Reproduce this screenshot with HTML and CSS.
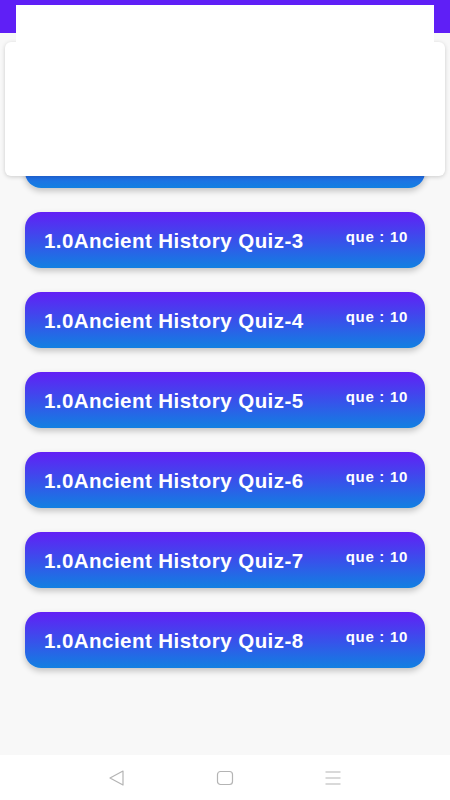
FILE: index.html
```html
<!DOCTYPE html>
<html lang="en">
<head>
    <meta charset="UTF-8">
    <meta name="viewport" content="width=device-width, initial-scale=1.0">
    <title>Ancient History Quiz</title>
    <link rel="stylesheet" href="styles.css">
</head>
<body>
    <div class="screen">
        <header class="topbar"></header>

        <!-- Lista de quizzes -->
        <main class="quiz-list">
            <div class="quiz-card"><span class="quiz-title">1.0Ancient History Quiz-1</span><span class="quiz-count">que : 10</span></div>
            <div class="quiz-card"><span class="quiz-title">1.0Ancient History Quiz-2</span><span class="quiz-count">que : 10</span></div>
            <div class="quiz-card"><span class="quiz-title">1.0Ancient History Quiz-3</span><span class="quiz-count">que : 10</span></div>
            <div class="quiz-card"><span class="quiz-title">1.0Ancient History Quiz-4</span><span class="quiz-count">que : 10</span></div>
            <div class="quiz-card"><span class="quiz-title">1.0Ancient History Quiz-5</span><span class="quiz-count">que : 10</span></div>
            <div class="quiz-card"><span class="quiz-title">1.0Ancient History Quiz-6</span><span class="quiz-count">que : 10</span></div>
            <div class="quiz-card"><span class="quiz-title">1.0Ancient History Quiz-7</span><span class="quiz-count">que : 10</span></div>
            <div class="quiz-card"><span class="quiz-title">1.0Ancient History Quiz-8</span><span class="quiz-count">que : 10</span></div>
        </main>

        <!-- Bloco em branco por cima (anúncio) -->
        <div class="overlay">
            <div class="overlay-tab"></div>
            <div class="overlay-card"></div>
        </div>

        <!-- Barra de navegação do sistema -->
        <nav class="navbar">
            <svg width="18" height="18" viewBox="0 0 18 18" aria-label="Voltar">
                <path d="M15 2 L2 9 L15 16 Z" fill="none" stroke="#b4b4b4" stroke-width="1.2" stroke-linejoin="round"/>
            </svg>
            <svg width="18" height="18" viewBox="0 0 18 18" aria-label="Início">
                <rect x="1.5" y="2.5" width="15" height="13" rx="3" fill="none" stroke="#b4b4b4" stroke-width="1.2"/>
            </svg>
            <svg width="18" height="18" viewBox="0 0 18 18" aria-label="Menu">
                <path d="M1.5 3 H16.5 M1.5 9 H16.5 M1.5 15 H16.5" stroke="#b4b4b4" stroke-width="1.2"/>
            </svg>
        </nav>
    </div>
</body>
</html>
```

FILE: styles.css
```css
/* Estilos gerais */
html, body {
    margin: 0;
    padding: 0;
}

body {
    font-family: "Liberation Sans", Arial, sans-serif;
    background-color: #f8f8f8;
}

.screen {
    position: relative;
    width: 450px;
    height: 800px;
    overflow: hidden;
    display: flex;
    flex-direction: column;
}

.topbar {
    height: 33px;
    background: #5f1ff6;
    flex-shrink: 0;
}

/* Lista */
.quiz-list {
    flex: 1;
    overflow: hidden;
    display: flex;
    flex-direction: column;
    gap: 24px;
    padding: 19px 25px 0;
}

.quiz-card {
    height: 56px;
    flex-shrink: 0;
    display: flex;
    align-items: center;
    justify-content: space-between;
    padding: 0 18px 0 19px;
    border-radius: 16px;
    background: linear-gradient(to bottom, #621ff5, #1180e1);
    box-shadow: 0 3px 6px rgba(0, 0, 0, 0.22);
    color: #fff;
}

.quiz-title {
    font-size: 20.5px;
    font-weight: bold;
    letter-spacing: 0.45px;
    margin-top: 1px;
}

.quiz-count {
    font-size: 15px;
    font-weight: bold;
    letter-spacing: 0.7px;
    margin-right: -1px;
    margin-top: -7px;
}

/* Bloco branco */
.overlay {
    position: absolute;
    top: 5px;
    left: 5px;
    right: 5px;
}

.overlay-tab {
    height: 37px;
    margin: 0 11px 0 11px;
    background: #fff;
}

.overlay-card {
    height: 134px;
    background: #fff;
    border-radius: 6px;
    box-shadow: 0 1px 4px rgba(0, 0, 0, 0.18);
    position: relative;
}

.overlay-card::before {
    content: "";
    position: absolute;
    top: -6px;
    left: 11px;
    right: 11px;
    height: 12px;
    background: #fff;
}

/* Barra de navegação */
.navbar {
    height: 45px;
    flex-shrink: 0;
    background: #fff;
    display: flex;
    justify-content: center;
    align-items: center;
    gap: 90px;
}
```
